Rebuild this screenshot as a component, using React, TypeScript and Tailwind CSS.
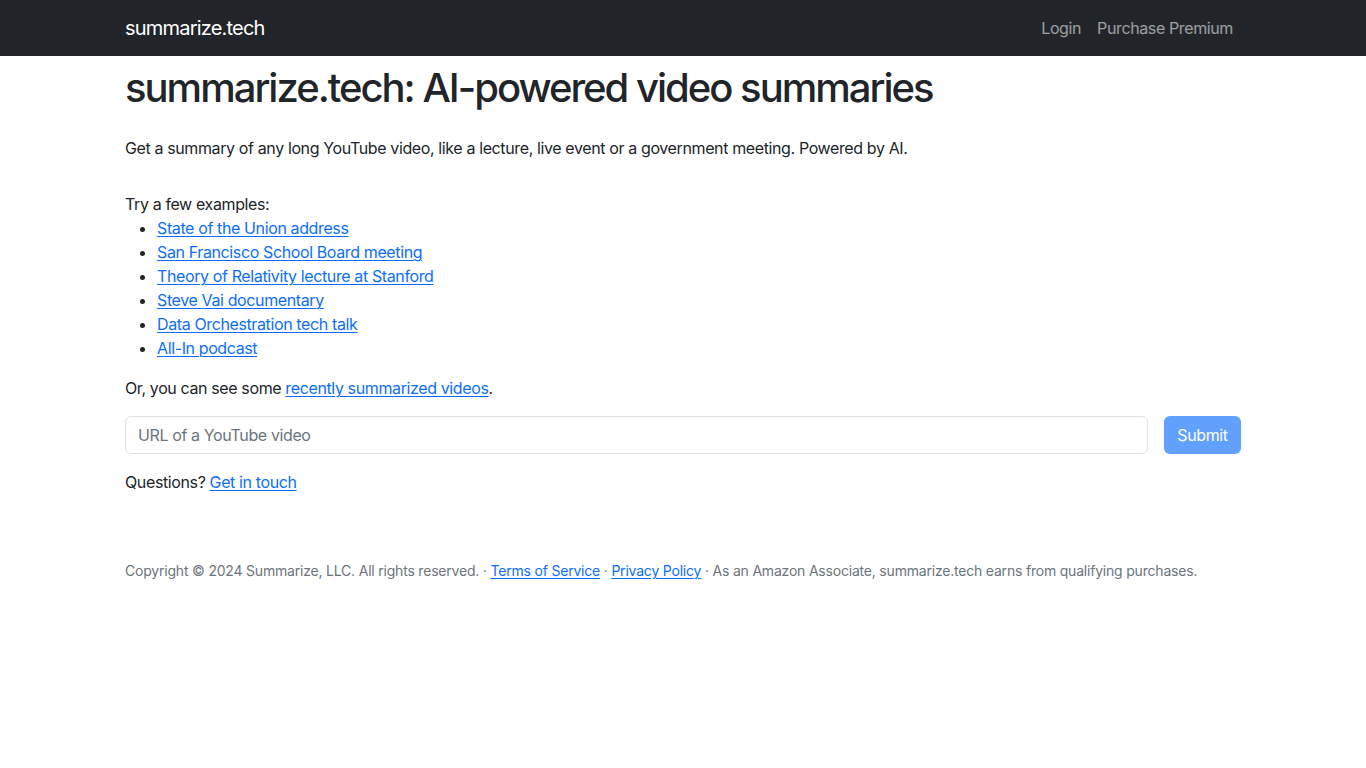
import React from 'react';

// Example video links shown under "Try a few examples"
const examples = [
  'State of the Union address',
  'San Francisco School Board meeting',
  'Theory of Relativity lecture at Stanford',
  'Steve Vai documentary',
  'Data Orchestration tech talk',
  'All-In podcast',
];

const linkClass = 'text-[#0d6efd] underline underline-offset-2 decoration-1';

const Navbar: React.FC = () => (
  <nav className="bg-[#212529] h-14">
    <div className="max-w-[1140px] mx-auto px-3 h-full flex items-center justify-between">
      <a href="#" className="text-white text-[20px] leading-[30px] tracking-[-0.8px]">summarize.tech</a>
      <div className="flex items-center tracking-[-0.38px]">
        <a href="#" className="px-2 py-2 text-white/55 text-[16px] leading-6">Login</a>
        <a href="#" className="px-2 py-2 text-white/55 text-[16px] leading-6">Purchase Premium</a>
      </div>
    </div>
  </nav>
);

const App: React.FC = () => {
  return (
    <div className="min-h-screen bg-white text-[#212529] text-[16px] leading-6 tracking-[-0.38px]" style={{ fontFamily: 'Inter, "Noto Sans", sans-serif' }}>
      <Navbar />
      <main className="max-w-[1140px] mx-auto px-3 pt-2">
        <h1 className="text-[40px] leading-[48px] font-medium tracking-[-2px]">summarize.tech: AI-powered video summaries</h1>
        <p className="mt-6">
          Get a summary of any long YouTube video, like a lecture, live event or a government meeting. Powered by AI.
        </p>
        <p className="mt-8">Try a few examples:</p>
        <ul className="list-disc pl-8">
          {examples.map((title) => (
            <li key={title}>
              <a href="#" className={linkClass}>{title}</a>
            </li>
          ))}
        </ul>
        <p className="mt-4">
          Or, you can see some <a href="#" className={linkClass}>recently summarized videos</a>.
        </p>
        <form className="mt-4 flex gap-4" onSubmit={(e) => e.preventDefault()}>
          <input
            type="text"
            placeholder="URL of a YouTube video"
            className="flex-1 h-[38px] px-3 border border-[#dee2e6] rounded-[6px] text-[16px] tracking-[-0.38px] placeholder:text-[#6c757d] outline-none"
          />
          <button
            type="submit"
            disabled
            className="h-[38px] w-[77px] rounded-[6px] bg-[#0d6efd] opacity-65 text-white text-[16px] tracking-[-0.38px]"
          >
            Submit
          </button>
        </form>
        <p className="mt-4">
          Questions? <a href="#" className={linkClass}>Get in touch</a>
        </p>
        <footer className="mt-[66px] text-[14px] leading-[21px] tracking-[-0.2px] text-[#6c757d]">
          Copyright © 2024 Summarize, LLC. All rights reserved. · <a href="#" className={linkClass}>Terms of Service</a> ·{' '}
          <a href="#" className={linkClass}>Privacy Policy</a> · As an Amazon Associate, summarize.tech earns from qualifying purchases.
        </footer>
      </main>
    </div>
  );
};

export default App;
